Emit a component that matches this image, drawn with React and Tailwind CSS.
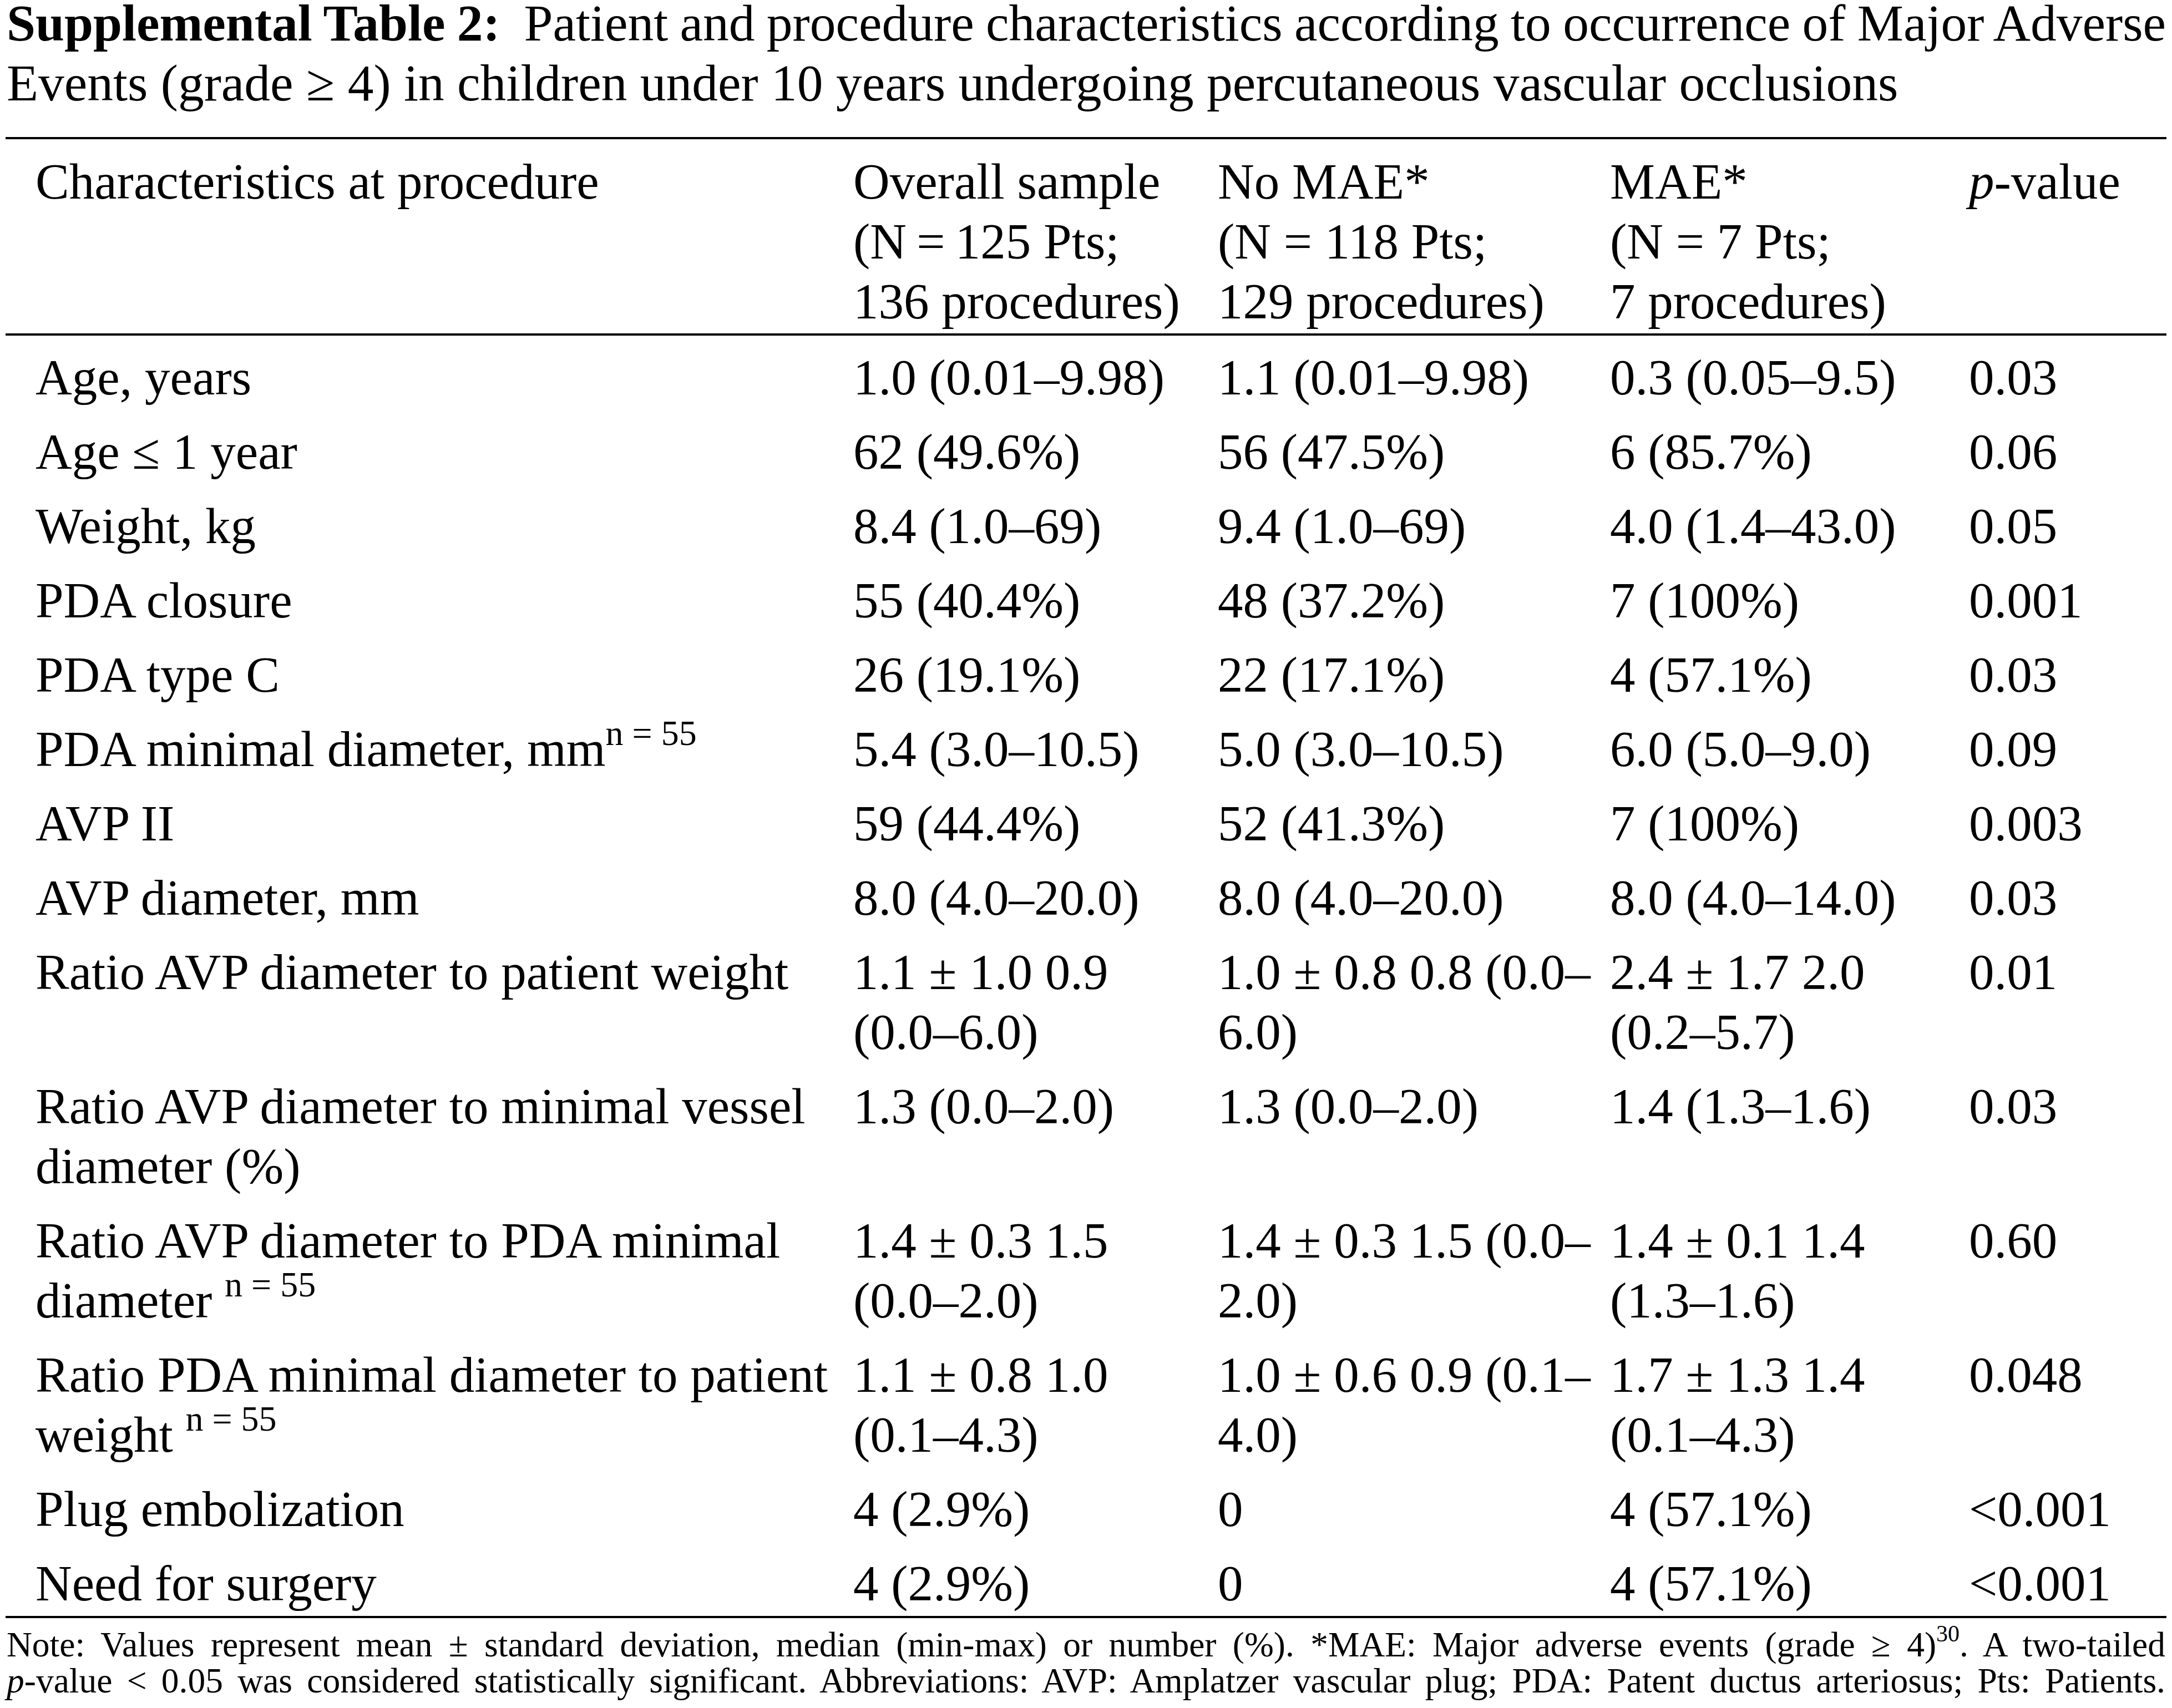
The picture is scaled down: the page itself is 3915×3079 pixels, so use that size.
import React from 'react';

const COLS = 'grid grid-cols-[1528px_657px_707px_647px_356px]';

function Sup({ children }) {
  return <sup className="relative -top-[38px] align-baseline text-[64px] leading-none">{children}</sup>;
}

const rows = [
  { label: ['Age, years'], cells: [['1.0 (0.01–9.98)'], ['1.1 (0.01–9.98)'], ['0.3 (0.05–9.5)'], ['0.03']] },
  { label: ['Age ≤ 1 year'], cells: [['62 (49.6%)'], ['56 (47.5%)'], ['6 (85.7%)'], ['0.06']] },
  { label: ['Weight, kg'], cells: [['8.4 (1.0–69)'], ['9.4 (1.0–69)'], ['4.0 (1.4–43.0)'], ['0.05']] },
  { label: ['PDA closure'], cells: [['55 (40.4%)'], ['48 (37.2%)'], ['7 (100%)'], ['0.001']] },
  { label: ['PDA type C'], cells: [['26 (19.1%)'], ['22 (17.1%)'], ['4 (57.1%)'], ['0.03']] },
  {
    label: [<>PDA minimal diameter, mm<Sup>n = 55</Sup></>],
    cells: [['5.4 (3.0–10.5)'], ['5.0 (3.0–10.5)'], ['6.0 (5.0–9.0)'], ['0.09']],
  },
  { label: ['AVP II'], cells: [['59 (44.4%)'], ['52 (41.3%)'], ['7 (100%)'], ['0.003']] },
  { label: ['AVP diameter, mm'], cells: [['8.0 (4.0–20.0)'], ['8.0 (4.0–20.0)'], ['8.0 (4.0–14.0)'], ['0.03']] },
  {
    label: ['Ratio AVP diameter to patient weight'],
    cells: [['1.1 ± 1.0 0.9', '(0.0–6.0)'], ['1.0 ± 0.8 0.8 (0.0–', '6.0)'], ['2.4 ± 1.7 2.0', '(0.2–5.7)'], ['0.01']],
  },
  {
    label: ['Ratio AVP diameter to minimal vessel', 'diameter (%)'],
    cells: [['1.3 (0.0–2.0)'], ['1.3 (0.0–2.0)'], ['1.4 (1.3–1.6)'], ['0.03']],
  },
  {
    label: ['Ratio AVP diameter to PDA minimal', <>diameter <Sup>n = 55</Sup></>],
    cells: [['1.4 ± 0.3 1.5', '(0.0–2.0)'], ['1.4 ± 0.3 1.5 (0.0–', '2.0)'], ['1.4 ± 0.1 1.4', '(1.3–1.6)'], ['0.60']],
  },
  {
    label: ['Ratio PDA minimal diameter to patient', <>weight <Sup>n = 55</Sup></>],
    cells: [['1.1 ± 0.8 1.0', '(0.1–4.3)'], ['1.0 ± 0.6 0.9 (0.1–', '4.0)'], ['1.7 ± 1.3 1.4', '(0.1–4.3)'], ['0.048']],
  },
  { label: ['Plug embolization'], cells: [['4 (2.9%)'], ['0'], ['4 (57.1%)'], ['<0.001']] },
  { label: ['Need for surgery'], cells: [['4 (2.9%)'], ['0'], ['4 (57.1%)'], ['<0.001']] },
];

function Lines({ lines, className = '' }) {
  return (
    <div className={className}>
      {lines.map((l, i) => (
        <div key={i} className="whitespace-nowrap">
          {l}
        </div>
      ))}
    </div>
  );
}

export default function App() {
  return (
    <div
      className="min-h-screen w-[3915px] bg-white pl-[10px] pr-[10px] text-black"
      style={{ fontFamily: '"Liberation Serif", "Times New Roman", serif' }}
    >
      {/* caption */}
      <div className="w-[3893px] pl-[2px] text-[93.5px]">
        <div className="whitespace-nowrap text-justify leading-[84px] [text-align-last:justify] [word-spacing:-2px]">
          <b>Supplemental Table 2:</b>&nbsp; Patient and procedure characteristics according to occurrence of Major
          Adverse
        </div>
        <div className="mt-[12px] leading-[107px]">
          Events (grade ≥ 4) in children under 10 years undergoing percutaneous vascular occlusions
        </div>
      </div>

      <div className="mt-[44px] w-[3895px] border-t-4 border-black text-[91px] leading-[108px]">
        {/* header */}
        <div className={`${COLS} border-b-4 border-black pt-[23px] pb-[3px]`}>
          <Lines className="pl-[54px]" lines={['Characteristics at procedure']} />
          <Lines lines={['Overall sample', '(N\u2009=\u2009125 Pts;', '136 procedures)']} />
          <Lines lines={['No MAE*', '(N = 118 Pts;', '129 procedures)']} />
          <Lines lines={['MAE*', '(N = 7 Pts;', '7 procedures)']} />
          <Lines lines={[<><i>p</i>-value</>]} />
        </div>

        {/* body */}
        <div className="border-b-4 border-black pt-[9px]">
          {rows.map((r, i) => (
            <div key={i} className={`${COLS} pt-[13px] ${i === rows.length - 1 ? 'pb-[4px]' : 'pb-[13px]'}`}>
              <Lines className="pl-[54px]" lines={r.label} />
              {r.cells.map((c, j) => (
                <Lines key={j} lines={c} />
              ))}
            </div>
          ))}
        </div>
      </div>

      {/* note */}
      <div className="mt-[15px] w-[3893px] pl-[2px] text-[63.5px] leading-[65px]">
        <div className="text-justify [text-align-last:justify]">
          Note: Values represent mean ± standard deviation, median (min-max) or number (%). *MAE: Major adverse events
          (grade ≥ 4)<sup className="relative -top-[27px] align-baseline text-[42px] leading-none">30</sup>. A
          two-tailed
        </div>
        <div className="text-justify [text-align-last:justify]">
          <i>p</i>-value &lt; 0.05 was considered statistically significant. Abbreviations: AVP: Amplatzer vascular
          plug; PDA: Patent ductus arteriosus; Pts: Patients.
        </div>
      </div>
    </div>
  );
}
